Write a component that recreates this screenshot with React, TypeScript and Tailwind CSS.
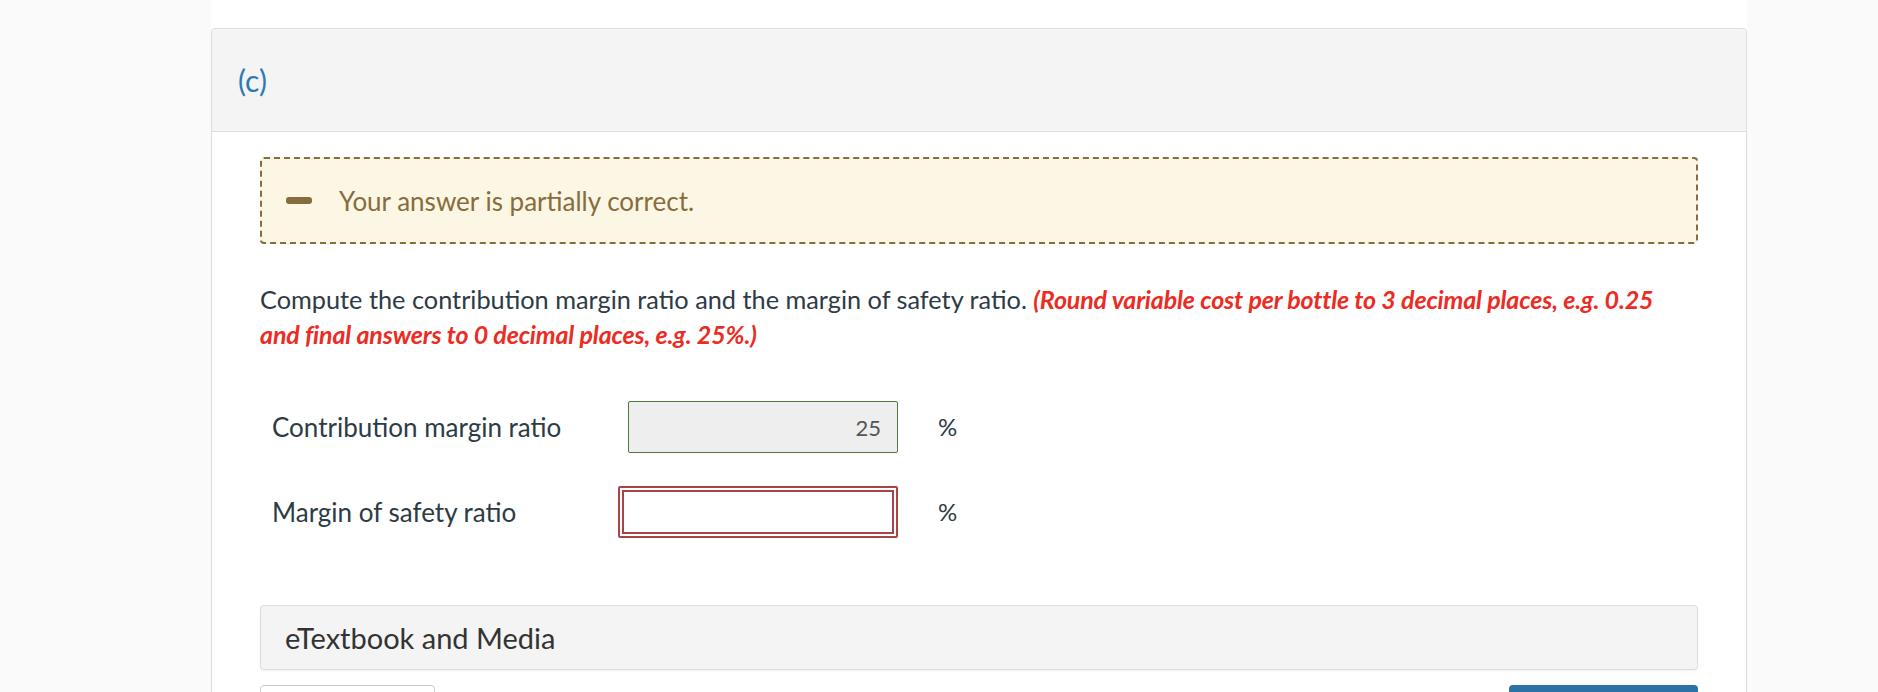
import React from "react";

export default function App() {
  return (
    <div className="h-[692px] w-full bg-[#fafafa] overflow-hidden" style={{ fontFamily: "Lato, 'Noto Sans', sans-serif" }}>
      <div className="ml-[211px] w-[1536px] bg-white pt-[28px] h-[692px]">
        <div className="rounded-t-[4px] border border-[#dddddd] h-[700px]">
          <div className="h-[103px] bg-[#f4f4f4] border-b border-[#dddddd] flex items-center pl-[26px] rounded-t-[4px]">
            <span className="text-[30px] text-[#2f7ab3] leading-none">(c)</span>
          </div>
          <div className="px-[48px] pt-[25px]">
            <div className="h-[87px] rounded-[4px] border-2 border-dashed border-[#876d3c] bg-[#fbf7e4] flex items-center pl-[24px]">
              <span className="block w-[26px] h-[7px] rounded-[3px] bg-[#876d3c]" />
              <span className="ml-[27px] text-[26px] text-[#876d3c] leading-none">Your answer is partially correct.</span>
            </div>
            <p className="mt-[38px] pr-[12px] text-[25.3px] leading-[35px] text-[#2d3b45]">
              Compute the contribution margin ratio and the margin of safety ratio.{" "}
              <span className="font-bold italic text-[#ec2c22] text-[25px] tracking-[-0.15px]">
                (Round variable cost per bottle to 3 decimal places, e.g. 0.25 and final answers to 0 decimal places, e.g. 25%.)
              </span>
            </p>
            <div className="mt-[49px] flex flex-col gap-[33px] pl-[12px]">
              <div className="flex items-center h-[52px]">
                <div className="w-[346px] text-[26px] text-[#2d3b45]">Contribution margin ratio</div>
                <div className="w-[280px] flex justify-end">
                  <div className="w-[270px] h-[52px] rounded-[2px] border border-[#4e7a3c] bg-[#eeeeee] flex items-center justify-end pr-[16px] text-[22px] text-[#555555]">
                    25
                  </div>
                </div>
                <div className="ml-[40px] text-[24px] text-[#2d3b45]">%</div>
              </div>
              <div className="flex items-center h-[52px]">
                <div className="w-[346px] text-[26px] text-[#2d3b45]">Margin of safety ratio</div>
                <div className="w-[280px] h-[52px] rounded-[2px] border-2 border-[#a94442] p-[2px]">
                  <div className="w-full h-full border-2 border-[#a94442] bg-white" />
                </div>
                <div className="ml-[40px] text-[24px] text-[#2d3b45]">%</div>
              </div>
            </div>
            <div className="mt-[67px] h-[65px] rounded-[4px] border border-[#dddddd] bg-[#f4f4f4] shadow-[0_1px_2px_rgba(0,0,0,0.06)] flex items-center pl-[24px]">
              <span className="text-[29px] text-[#333333]">eTextbook and Media</span>
            </div>
            <div className="mt-[15px] flex justify-between">
              <div className="w-[175px] h-[44px] rounded-[4px] border border-[#cccccc] bg-white" />
              <div className="w-[189px] h-[44px] rounded-[4px] bg-[#2d72a6]" />
            </div>
          </div>
        </div>
      </div>
    </div>
  );
}
